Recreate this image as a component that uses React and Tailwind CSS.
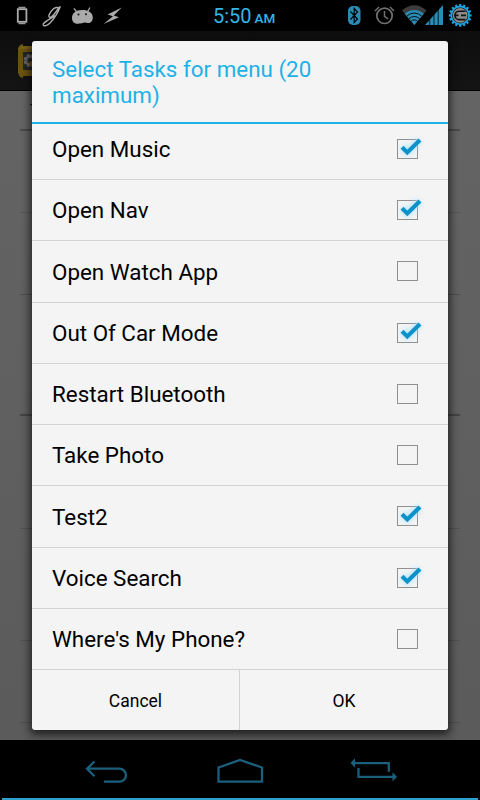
const TASKS = [
  { name: 'Open Music', checked: true },
  { name: 'Open Nav', checked: true },
  { name: 'Open Watch App', checked: false },
  { name: 'Out Of Car Mode', checked: true },
  { name: 'Restart Bluetooth', checked: false },
  { name: 'Take Photo', checked: false },
  { name: 'Test2', checked: true },
  { name: 'Voice Search', checked: true },
  { name: "Where's My Phone?", checked: false },
]

const TEETH = [0, 22.5, 45, 67.5, 90, 112.5, 135, 157.5, 180, 202.5, 225, 247.5, 270, 292.5, 315, 337.5]

const StatusBar = () => (
  <header className="relative h-[31px] shrink-0 bg-black">
    <svg className="block h-[31px] w-[480px]" viewBox="0 0 480 31" fill="none">
      {/* watch */}
      <rect x="17.8" y="9.200" width="8.600" height="12.600" stroke="#aaa" strokeWidth="1.800" />
      <path d="M18.500 7.600h7M18.500 23.400h7" stroke="#999" strokeWidth="1.600" />
      {/* script g */}
      <path
        d="M58.500 10c.3-2.800-2.500-3.500-5.500-.8-3.800 3.400-5.200 8.300-3 8.200 2.700-.2 6-5.300 8.500-9.200l1.800-1.700c-1.800 4.500-6.300 12.500-10.300 16.500-2.800 2.800-6 3.500-6.700 2-.9-2.400 4.500-4.600 11.200-9"
        stroke="#aaa"
        strokeWidth="1.500"
        strokeLinecap="round"
      />
      {/* android head */}
      <path d="M74.300 8.800l2.500 3.200M89.700 8l-2 3.500" stroke="#aaa" strokeWidth="1.300" strokeLinecap="round" />
      <path
        d="M72 18c0-5 4-8 10-8 6.500 0 10.800 2.500 10.800 7.500 0 3.500-1.800 5.500-4.800 5.500-1.500 0-2-.5-3-.5-2 0-4 1.300-7.500 1.300-3.500 0-5.500-2.500-5.500-5.800z"
        fill="#aaa"
      />
      <circle cx="78.500" cy="14.500" r="1" fill="#111" />
      <circle cx="86" cy="14.300" r="1" fill="#111" />
      {/* lightning */}
      <path d="M121.800 7.500L107.500 14.500l5.500 1.700-9.500 7.800 15.500-6.700-5.200-1.900z" fill="#aaa" />
      {/* bluetooth */}
      <rect x="348" y="6" width="12.500" height="19" rx="5" fill="#2a8bb5" />
      <path d="M350.500 11.500l7 7.500-3.300 3.500v-14l3.300 3.500-7 7.500" stroke="#000" strokeWidth="1.200" />
      {/* alarm */}
      <circle cx="384.500" cy="15.800" r="7.700" stroke="#707070" strokeWidth="1.700" />
      <path d="M384.500 11v5.300l3.500 2.500M375 11l4-4M394 11l-4-4" stroke="#707070" strokeWidth="1.500" />
      {/* wifi */}
      <path d="M402 10.500a17 17 0 0 1 24.500 0l-12.200 14.500z" fill="#3c3c3c" />
      <path d="M404.800 13.800a13.500 13.500 0 0 1 19 0l-9.500 11.200z" fill="#2a8bb5" />
      <path
        d="M407 16a10.500 10.500 0 0 1 14.600 0M409 18.700a7.500 7.500 0 0 1 10.600 0M411 21.300a4.500 4.500 0 0 1 6.600 0"
        stroke="#000"
        strokeWidth=".9"
      />
      {/* signal */}
      <path d="M425 25L443 5v20z" fill="#2a8bb5" />
      <path d="M429.700 12v14M434 10v16M438.200 6v20" stroke="#000" strokeWidth=".8" />
      {/* battery gear */}
      {TEETH.map((deg) => (
        <rect key={deg} x="459.100" y="4" width="2.200" height="3" fill="#1ba3dd" transform={`rotate(${deg} 460.200 15.400)`} />
      ))}
      <circle cx="460.200" cy="15.400" r="8.900" stroke="#1ba3dd" strokeWidth="1.800" />
      <circle cx="460.200" cy="15.400" r="7.400" fill="#8b8b8b" />
      <path d="M465.500 11.200h-6.300a4.200 4.200 0 0 0 0 8.400h6.300M454 15.400h4.500M461 15.400h5" stroke="#111" strokeWidth="1.600" />
    </svg>
    <div className="absolute left-[213px] top-[4px] whitespace-nowrap text-[20px] leading-[24px] text-[#33b5e5]">
      5:50 <span className="-ml-[2px] text-[13.5px] font-medium">AM</span>
    </div>
  </header>
)

const ActionBar = () => (
  <div className="h-[60px] shrink-0 border-b border-black bg-gradient-to-b from-[#0e0e0e] to-[#141414] pl-[18px] pt-[12px]">
    <svg className="block" width="30" height="36" viewBox="0 0 30 36">
      <path d="M0 5l2-3 3-1v2h25v30H5v2l-3-1-2-4z" fill="#6b5314" />
      <path d="M1 5l2-2h27v3H1z" fill="#77601c" />
      <rect x="5" y="9" width="25" height="18" fill="#252525" />
      <circle cx="12" cy="17.500" r="4.500" fill="none" stroke="#666" strokeWidth="4" strokeDasharray="2.400 1.200" />
      <circle cx="12" cy="17.500" r="4.300" fill="none" stroke="#666" strokeWidth="2" />
      <circle cx="14" cy="20.500" r="2.500" fill="#7c4c14" />
    </svg>
  </div>
)

const Background = () => (
  <div className="flex flex-1 flex-col bg-gradient-to-b from-[#646464] to-[#5b5b5b] px-5">
    <div className="h-[38px] pl-[10px] pt-[9px] text-[14px] text-black">T</div>
    <div className="h-[2px] bg-[#4a4a4a]" />
    <div className="h-[82px] border-b border-[#565656]" />
    <div className="h-[82px] border-b border-[#505050]" />
    <div className="h-[119px]" />
    <div className="h-[2px] bg-[#454545]" />
    <div className="h-[113px] border-b border-[#505050]" />
    <div className="h-[112px] border-b border-[#505050]" />
    <div className="h-[82px] border-b border-[#505050]" />
  </div>
)

const Checkbox = ({ checked }) => (
  <svg className="block" width="32" height="32" viewBox="0 0 32 32" fill="none">
    <rect x="5.500" y="6.500" width="20" height="19" stroke="#909090" />
    {checked && (
      <>
        <path d="M10.500 14l5 5L27.500 7" stroke="#8fdcff" strokeWidth="8" strokeLinejoin="round" className="opacity-50 blur-[2px]" />
        <path d="M10 14l5.300 5.300L28 6.800" stroke="#f4f4f4" strokeWidth="5" className="opacity-50" />
        <path d="M10 14.200l5.300 5.200L28 6.900" stroke="#0a93cb" strokeWidth="4.200" />
      </>
    )}
  </svg>
)

const TaskRow = ({ task }) => (
  <li className="flex h-[61.25px] shrink-0 items-center justify-between border-b border-[#d2d2d2] pl-5 pr-6">
    <span className="pt-[2px] text-[22.4px] text-black">{task.name}</span>
    <Checkbox checked={task.checked} />
  </li>
)

const Dialog = () => (
  <div className="absolute left-[32px] top-[41px] flex h-[689px] w-[416px] flex-col overflow-hidden rounded-[3px] bg-[#f4f4f4] shadow-[0_3px_8px_2px_rgba(0,0,0,0.65)]">
    <h1 className="h-[81px] shrink-0 px-5 pt-[15px] text-[22.4px] leading-[26px] text-[#1fb1e6]">
      Select Tasks for menu (20
      <br />
      maximum)
    </h1>
    <div className="h-[2px] shrink-0 bg-[#1fb1e6]" />
    <ul className="flex h-[546px] shrink-0 flex-col justify-end overflow-hidden">
      {TASKS.map((task) => (
        <TaskRow key={task.name} task={task} />
      ))}
    </ul>
    <div className="flex flex-1 text-[17.5px] text-black">
      <button type="button" className="w-[208px] border-r border-[#d2d2d2] pt-[2px]">Cancel</button>
      <button type="button" className="flex-1 pt-[2px]">OK</button>
    </div>
  </div>
)

const NavBar = () => (
  <nav className="h-[60px] shrink-0 bg-black">
    <svg className="block" width="480" height="60" viewBox="0 0 480 60" fill="none" stroke="#1b5f7d" strokeWidth="2.300">
      <path d="M94.500 21.500L87 28.700l7.500 7.500M87 28.700h32.500a6.500 6.500 0 0 1 0 13H104" />
      <path d="M218.500 41.700V27.500L240 20l22 7.500v14.200z" />
      <path d="M355 23.200h33.800v8.600M358.500 28v8.800H393" />
      <path d="M350.500 23l4.500-4.800v9.600zM397 36.800l-4.500-4.600v9.200z" fill="#1b5f7d" stroke="none" />
      <path d="M2 59h476" stroke="#2ba0cd" strokeWidth="2" />
    </svg>
  </nav>
)

const App = () => {
  return (
    <div className="relative flex h-[800px] w-[480px] flex-col overflow-hidden bg-black font-['Roboto',sans-serif]">
      <StatusBar />
      <ActionBar />
      <Background />
      <NavBar />
      <Dialog />
    </div>
  )
}

export default App
